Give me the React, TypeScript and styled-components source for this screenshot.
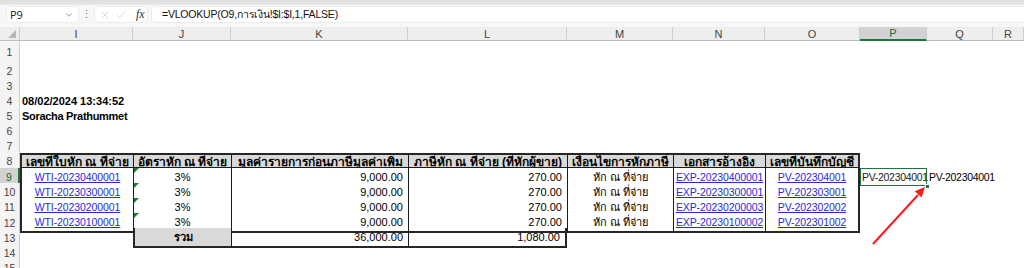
import React from "react";
import styled, { createGlobalStyle, css } from "styled-components";
import { ChevronDown, X, Check } from "lucide-react";

const GlobalStyle = createGlobalStyle`
  html, body {
    margin: 0;
    padding: 0;
    background: #ffffff;
    overflow: hidden;
  }
  body {
    font-family: "Liberation Sans", "Noto Sans", Tahoma, sans-serif;
  }
`;

const COLS = "20px 113px 98px 177px 159px 106px 92px 95px 67px 66px 1fr";

// lower case letter = thin line, upper case = medium line
const edge = (spec: string | undefined, side: string) => {
  if (!spec) return "none";
  if (spec.includes(side.toUpperCase())) return "2px solid #262626";
  if (spec.includes(side)) return "1px solid #1c1c1c";
  return "none";
};

const Page = styled.div`
  position: relative;
  width: 1024px;
  height: 268px;
  overflow: hidden;
`;

const TopStrip = styled.div`
  height: 5px;
  background: linear-gradient(#dcdcdc, #e9e9e9);
`;

const FormulaBar = styled.div`
  height: 22px;
  display: flex;
  align-items: flex-start;
  padding: 2px 0 0 7px;
  box-sizing: border-box;
  background: #f7f7f7;
`;

const Box = styled.div`
  height: 15px;
  background: #ffffff;
  border-radius: 4px;
  box-shadow: 0 0 0 1px #ececec;
  display: flex;
  align-items: center;
  box-sizing: border-box;
`;

const NameBox = styled(Box)`
  width: 71px;
  padding: 0 4px 0 3px;
  justify-content: space-between;
  font-family: "Open Sans", "Liberation Sans", sans-serif;
  font-size: 11px;
  color: #222;
`;

const Dots = styled.span`
  width: 17px;
  text-align: center;
  font-size: 11px;
  line-height: 15px;
  color: #666;
`;

const IconBox = styled(Box)`
  width: 52px;
  gap: 4px;
  padding-left: 4px;
`;

const Fx = styled.span`
  font-family: "Liberation Serif", serif;
  font-style: italic;
  font-size: 12px;
  color: #333;
  margin-left: 5px;
`;

const FormulaInput = styled(Box)`
  flex: 1;
  margin-left: 5px;
  border-radius: 4px 0 0 4px;
  padding-left: 10px;
  font-family: "Liberation Sans", sans-serif;
  font-size: 10.5px;
  letter-spacing: -0.2px;
  color: #111;
`;

const Row = styled.div<{ $h: number }>`
  display: grid;
  grid-template-columns: ${COLS};
  height: ${(p) => p.$h}px;
`;

const HeaderRow = styled(Row)`
  background: #eeeeee;
  border-bottom: 1px solid #bdbdbd;
  box-sizing: border-box;
`;

const Corner = styled.div`
  position: relative;
  border-right: 1px solid #cfcfcf;
  &::after {
    content: "";
    position: absolute;
    right: 3px;
    bottom: 2px;
    border-bottom: 8px solid #b8b8b8;
    border-left: 8px solid transparent;
  }
`;

const ColHead = styled.div<{ $sel?: boolean }>`
  display: flex;
  align-items: center;
  justify-content: center;
  font-size: 11px;
  color: #444;
  border-right: 1px solid #cfcfcf;
  box-sizing: border-box;
  ${(p) =>
    p.$sel &&
    css`
      background: #d2d2d2;
      color: #1d6b3f;
      border-bottom: 2px solid #217346;
      margin-bottom: -1px;
    `}
`;

const RowHead = styled.div<{ $sel?: boolean }>`
  display: flex;
  align-items: center;
  justify-content: center;
  font-size: 10.5px;
  color: #444;
  background: #f4f4f4;
  border-right: 1px solid #cfcfcf;
  box-sizing: border-box;
  ${(p) =>
    p.$sel &&
    css`
      background: #d2d2d2;
      color: #1d6b3f;
      border-right: 2px solid #217346;
    `}
`;

type Align = "left" | "center" | "right";

const Cell = styled.div<{
  $align?: Align;
  $bold?: boolean;
  $bg?: string;
  $b?: string;
  $size?: number;
  $clip?: boolean;
  $flag?: boolean;
  $sel?: boolean;
}>`
  position: relative;
  display: flex;
  align-items: center;
  justify-content: ${(p) =>
    p.$align === "right" ? "flex-end" : p.$align === "center" ? "center" : "flex-start"};
  padding: 0 ${(p) => (p.$align === "right" ? "5px" : "2px")} 0 2px;
  box-sizing: border-box;
  white-space: nowrap;
  overflow: ${(p) => (p.$clip ? "hidden" : "visible")};
  font-size: ${(p) => p.$size ?? 10.5}px;
  font-weight: ${(p) => (p.$bold ? 700 : 400)};
  color: #000;
  background: ${(p) => p.$bg || "transparent"};
  border-left: ${(p) => edge(p.$b, "l")};
  border-top: ${(p) => edge(p.$b, "t")};
  border-right: ${(p) => edge(p.$b, "r")};
  border-bottom: ${(p) => edge(p.$b, "b")};
  ${(p) =>
    p.$flag &&
    css`
      &::before {
        content: "";
        position: absolute;
        left: 0;
        top: 0;
        border-top: 5px solid #1e7a3c;
        border-right: 5px solid transparent;
      }
    `}
  ${(p) =>
    p.$sel &&
    css`
      color: #222;
      outline: 1px solid #217346;
      outline-offset: -1px;
      &::after {
        content: "";
        position: absolute;
        right: -3px;
        bottom: -3px;
        width: 5px;
        height: 5px;
        background: #217346;
        border: 1px solid #fff;
        box-sizing: border-box;
      }
    `}
`;

const Tight = styled.span`
  letter-spacing: -0.3px;
`;

const Link = styled.span`
  color: #2828e2;
  text-decoration: underline;
  letter-spacing: -0.1px;
`;

const Arrow = styled.svg`
  position: absolute;
  left: 0;
  top: 0;
  pointer-events: none;
`;

const colLetters = ["I", "J", "K", "L", "M", "N", "O", "P", "Q", "R"];

const headers = [
  "เลขที่ใบหัก ณ ที่จ่าย",
  "อัตราหัก ณ ที่จ่าย",
  "มูลค่ารายการก่อนภาษีมูลค่าเพิ่ม",
  "ภาษีหัก ณ ที่จ่าย (ที่หักผู้ขาย)",
  "เงื่อนไขการหักภาษี",
  "เอกสารอ้างอิง",
  "เลขที่บันทึกบัญชี",
];

const records = [
  { wti: "WTI-20230400001", exp: "EXP-20230400001", pv: "PV-202304001" },
  { wti: "WTI-20230300001", exp: "EXP-20230300001", pv: "PV-202303001" },
  { wti: "WTI-20230200001", exp: "EXP-20230200003", pv: "PV-202302002" },
  { wti: "WTI-20230100001", exp: "EXP-20230100002", pv: "PV-202301002" },
];

const HEAD_BG = "#d9d9d9";

const headBorder = (i: number) =>
  i === 0 ? "LTb" : i === headers.length - 1 ? "lTbR" : "lTb";

const App: React.FC = () => (
  <Page>
    <GlobalStyle />
    <TopStrip />
    <FormulaBar>
      <NameBox>
        <span>P9</span>
        <ChevronDown size={10} strokeWidth={1.5} color="#555" />
      </NameBox>
      <Dots>⋮</Dots>
      <IconBox>
        <X size={12} strokeWidth={1} color="#b5b5b5" />
        <Check size={12} strokeWidth={1} color="#b5b5b5" />
        <Fx>fx</Fx>
      </IconBox>
      <FormulaInput>=VLOOKUP(O9,การเงิน!$I:$I,1,FALSE)</FormulaInput>
    </FormulaBar>

    <HeaderRow $h={14}>
      <Corner />
      {colLetters.map((c) => (
        <ColHead key={c} $sel={c === "P"}>
          {c}
        </ColHead>
      ))}
    </HeaderRow>

    <Row $h={22}>
      <RowHead>1</RowHead>
    </Row>
    <Row $h={15}>
      <RowHead>2</RowHead>
    </Row>
    <Row $h={15}>
      <RowHead>3</RowHead>
    </Row>
    <Row $h={15}>
      <RowHead>4</RowHead>
      <Cell $bold $size={11}>
        08/02/2024 13:34:52
      </Cell>
    </Row>
    <Row $h={15}>
      <RowHead>5</RowHead>
      <Cell $bold $size={11}>
        <Tight>Soracha Prathummet</Tight>
      </Cell>
    </Row>
    <Row $h={15}>
      <RowHead>6</RowHead>
    </Row>
    <Row $h={15}>
      <RowHead>7</RowHead>
    </Row>
    <Row $h={15}>
      <RowHead>8</RowHead>
      {headers.map((h, i) => (
        <Cell key={h} $align="center" $bold $size={12} $clip $bg={HEAD_BG} $b={headBorder(i)}>
          {h}
        </Cell>
      ))}
    </Row>

    {records.map((r, i) => {
      const last = i === records.length - 1;
      const b = last ? "lB" : "l";
      return (
        <Row $h={15} key={r.wti}>
          <RowHead $sel={i === 0}>{9 + i}</RowHead>
          <Cell $align="center" $b={last ? "LB" : "L"}>
            <Link>{r.wti}</Link>
          </Cell>
          <Cell $align="center" $b={b} $flag $size={11}>
            3%
          </Cell>
          <Cell $align="right" $b={b} $size={11}>
            9,000.00
          </Cell>
          <Cell $align="right" $b={b} $size={11}>
            270.00
          </Cell>
          <Cell $align="center" $b={b} $size={11}>
            หัก ณ ที่จ่าย
          </Cell>
          <Cell $align="center" $b={b}>
            <Link>{r.exp}</Link>
          </Cell>
          <Cell $align="center" $b={b + "R"}>
            <Link>{r.pv}</Link>
          </Cell>
          {i === 0 && (
            <>
              <Cell $sel>
                <Tight>PV-202304001</Tight>
              </Cell>
              <Cell>
                <Tight>PV-202304001</Tight>
              </Cell>
            </>
          )}
        </Row>
      );
    })}

    <Row $h={17}>
      <RowHead>13</RowHead>
      <Cell />
      <Cell $align="center" $bold $size={11} $bg={HEAD_BG} $b="LB">
        รวม
      </Cell>
      <Cell $align="right" $size={11} $b="lB">
        36,000.00
      </Cell>
      <Cell $align="right" $size={11} $b="lBR">
        1,080.00
      </Cell>
    </Row>
    <Row $h={15}>
      <RowHead>14</RowHead>
    </Row>
    <Row $h={15}>
      <RowHead>15</RowHead>
    </Row>

    <Arrow width={1024} height={268} viewBox="0 0 1024 268">
      <line x1={873} y1={244} x2={918} y2={195} stroke="#ff1a1a" strokeWidth={2} />
      <polygon points="925,187 921.5,197.5 914.8,191.3" fill="#ff1a1a" />
    </Arrow>
  </Page>
);

export default App;
